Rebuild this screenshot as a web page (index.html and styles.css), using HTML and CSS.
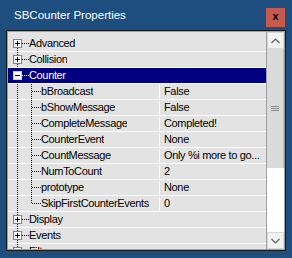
FILE: index.html
```html
<!DOCTYPE html>
<html>
<head>
<meta charset="utf-8">
<link rel="stylesheet" href="styles.css">
</head>
<body>
<svg class="defs" width="0" height="0">
  <symbol id="catfirst" viewBox="0 0 34 16">
    <line x1="9.5" y1="12" x2="9.5" y2="16" stroke="#000" stroke-dasharray="1 1"/>
    <line x1="14" y1="7.5" x2="21" y2="7.5" stroke="#000" stroke-dasharray="1 1"/>
    <rect x="5.5" y="3.5" width="8" height="8" fill="#fff" stroke="#808080"/>
    <line x1="7" y1="7.5" x2="12" y2="7.5" stroke="#000"/>
    <line x1="9.5" y1="5" x2="9.5" y2="10" stroke="#000"/>
  </symbol>
  <symbol id="cat" viewBox="0 0 34 16">
    <line x1="9.5" y1="0" x2="9.5" y2="16" stroke="#000" stroke-dasharray="1 1"/>
    <line x1="14" y1="7.5" x2="21" y2="7.5" stroke="#000" stroke-dasharray="1 1"/>
    <rect x="5.5" y="3.5" width="8" height="8" fill="#fff" stroke="#808080"/>
    <line x1="7" y1="7.5" x2="12" y2="7.5" stroke="#000"/>
    <line x1="9.5" y1="5" x2="9.5" y2="10" stroke="#000"/>
  </symbol>
  <symbol id="catopen" viewBox="0 0 34 16">
    <rect x="5.5" y="3.5" width="8" height="8" fill="#fff" stroke="#d0d0d0"/>
    <line x1="7" y1="7.5" x2="12" y2="7.5" stroke="#000"/>
    <line x1="14" y1="7.5" x2="21" y2="7.5" stroke="#fff" stroke-dasharray="1 1"/>
  </symbol>
  <symbol id="child" viewBox="0 0 34 16">
    <line x1="9.5" y1="0" x2="9.5" y2="16" stroke="#000" stroke-dasharray="1 1"/>
    <line x1="23.5" y1="0" x2="23.5" y2="16" stroke="#000" stroke-dasharray="1 1"/>
    <line x1="24" y1="7.5" x2="33" y2="7.5" stroke="#000" stroke-dasharray="1 1"/>
  </symbol>
  <symbol id="childlast" viewBox="0 0 34 16">
    <line x1="9.5" y1="0" x2="9.5" y2="16" stroke="#000" stroke-dasharray="1 1"/>
    <line x1="23.5" y1="0" x2="23.5" y2="8" stroke="#000" stroke-dasharray="1 1"/>
    <line x1="24" y1="7.5" x2="33" y2="7.5" stroke="#000" stroke-dasharray="1 1"/>
  </symbol>
</svg>

<div class="titlebar">
  <div class="title">SBCounter Properties</div>
  <div class="close">x</div>
</div>

<div class="grid">
  <div class="list">
    <div class="row cat"><svg class="g gc"><use href="#catfirst"/></svg><span class="name">Advanced</span></div>
    <div class="row cat"><svg class="g gc"><use href="#cat"/></svg><span class="name">Collision</span></div>
    <div class="row cat sel"><svg class="g gc"><use href="#catopen"/></svg><span class="name">Counter</span></div>
    <div class="row prop"><div class="ncell"><svg class="g gp"><use href="#child"/></svg><span class="name">bBroadcast</span></div><div class="vcell">False</div></div>
    <div class="row prop"><div class="ncell"><svg class="g gp"><use href="#child"/></svg><span class="name">bShowMessage</span></div><div class="vcell">False</div></div>
    <div class="row prop"><div class="ncell"><svg class="g gp"><use href="#child"/></svg><span class="name">CompleteMessage</span></div><div class="vcell">Completed!</div></div>
    <div class="row prop"><div class="ncell"><svg class="g gp"><use href="#child"/></svg><span class="name">CounterEvent</span></div><div class="vcell">None</div></div>
    <div class="row prop"><div class="ncell"><svg class="g gp"><use href="#child"/></svg><span class="name">CountMessage</span></div><div class="vcell">Only %i more to go...</div></div>
    <div class="row prop"><div class="ncell"><svg class="g gp"><use href="#child"/></svg><span class="name">NumToCount</span></div><div class="vcell">2</div></div>
    <div class="row prop"><div class="ncell"><svg class="g gp"><use href="#child"/></svg><span class="name">prototype</span></div><div class="vcell">None</div></div>
    <div class="row prop"><div class="ncell"><svg class="g gp"><use href="#childlast"/></svg><span class="name">SkipFirstCounterEvents</span></div><div class="vcell">0</div></div>
    <div class="row cat"><svg class="g gc"><use href="#cat"/></svg><span class="name">Display</span></div>
    <div class="row cat"><svg class="g gc"><use href="#cat"/></svg><span class="name">Events</span></div>
    <div class="row cat"><svg class="g gc"><use href="#cat"/></svg><span class="name">Filters</span></div>
  </div>
  <div class="scroll">
    <div class="sbtn"><svg width="9" height="6" viewBox="0 0 9 6"><polyline points="0.5,5 4.5,1 8.5,5" fill="none" stroke="#606060" stroke-width="1.2"/></svg></div>
    <div class="thumb"><svg width="8" height="6" viewBox="0 0 8 6"><path d="M0 0.5H8M0 2.5H8M0 4.5H8" stroke="#8a8a8a"/></svg></div>
    <div class="track"></div>
    <div class="sbtn"><svg width="9" height="6" viewBox="0 0 9 6"><polyline points="0.5,1 4.5,5 8.5,1" fill="none" stroke="#606060" stroke-width="1.2"/></svg></div>
  </div>
</div>
</body>
</html>
```
FILE: styles.css
```css
* { box-sizing: border-box; }
html, body { margin: 0; padding: 0; }
body {
  width: 292px;
  height: 258px;
  overflow: hidden;
  background: #1e4e7e;
  font-family: "Liberation Sans", Arial, sans-serif;
}
.defs { position: absolute; width: 0; height: 0; }
.titlebar {
  height: 30px;
  display: flex;
  justify-content: space-between;
  align-items: flex-start;
  padding: 8px 7px 0 14px;
}
.title {
  color: #fff;
  font-size: 11.5px;
  line-height: 15px;
}
.close {
  width: 19px;
  height: 19px;
  background: #c65a4e;
  color: #000;
  font-size: 11px;
  font-weight: bold;
  line-height: 17px;
  text-align: center;
}
.grid {
  margin: 0 6px;
  height: 221px;
  border: 1px solid #1a1a1a;
  padding: 1px;
  box-shadow: inset 0 0 0 1px #a0a0a0;
  background: #e3e3e3;
  display: flex;
}
.list {
  flex: 1;
  overflow: hidden;
  padding-top: 4px;
  font-size: 11px;
  letter-spacing: -0.35px;
  color: #000;
}
.row {
  height: 16px;
  border-bottom: 1px solid #fff;
  display: flex;
  align-items: stretch;
  line-height: 15px;
  white-space: nowrap;
}
.row.sel {
  background: #000080;
  color: #fff;
}
.g {
  flex: none;
  width: 34px;
  height: 16px;
  overflow: visible;
}
.gc { margin-right: -13px; }
.gp { margin-right: -1px; }
.name { overflow: hidden; }
.ncell {
  width: 151px;
  flex: none;
  display: flex;
  overflow: hidden;
}
.vcell {
  flex: 1;
  border-left: 1px solid #fff;
  padding-left: 4px;
  overflow: hidden;
}
.scroll {
  width: 18px;
  flex: none;
  border-left: 1px solid #a0a0a0;
  display: flex;
  flex-direction: column;
  background: #fff;
}
.sbtn {
  height: 17px;
  background: #f2f2f2;
  border: 1px solid #d8d8d8;
  display: flex;
  align-items: center;
  justify-content: center;
}
.thumb {
  height: 119px;
  background: #dadada;
  border-right: 1px solid #b8b8b8;
  display: flex;
  align-items: center;
  justify-content: center;
}
.track { flex: 1; background: #fff; }
```
